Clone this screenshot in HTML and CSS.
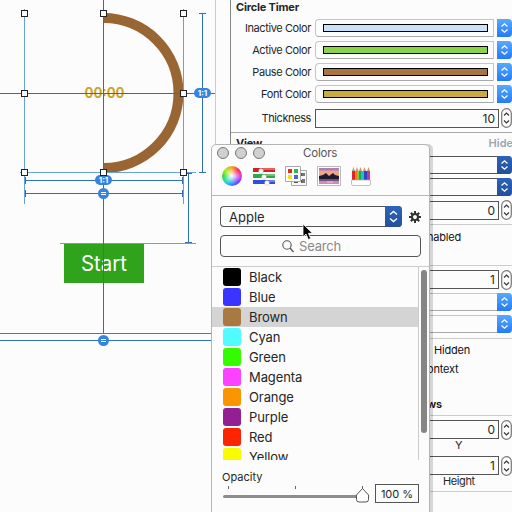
FILE: index.html
```
<!DOCTYPE html>
<html lang="en">
<head>
<meta charset="utf-8">
<title>Circle Timer</title>
<link rel="stylesheet" href="styles.css">
</head>
<body>
<svg class="defs" width="0" height="0">
  <symbol id="chev" viewBox="0 0 15 18"><path d="M4.500 7.500 7.500 4.800l3 2.700M4.500 10.500l3 2.700 3-2.700" fill="none" stroke="#fff" stroke-width="1.300"/></symbol>
  <symbol id="step" viewBox="0 0 11 20"><rect x=".7" y=".7" width="9.600" height="18.600" rx="4.800" fill="#fcfcfc" stroke="#777" stroke-width="1.200"/><path d="M3 7.500 5.500 5 8 7.500M3 12.500 5.500 15 8 12.500" fill="none" stroke="#333" stroke-width="1.100"/></symbol>
</svg>
<main class="app">
  <section class="canvas">
    <svg width="215" height="512" viewBox="0 0 215 512">
      <path d="M103.500 18A75 75 0 0 1 103.500 168" fill="none" stroke="#996633" stroke-width="10"/>
      <text x="84.500" y="97.500" class="time" textLength="40" lengthAdjust="spacingAndGlyphs">00:00</text>
      <rect x="64" y="243" width="80" height="40" fill="#2fa31b"/>
      <text x="81" y="271" class="start" textLength="46" lengthAdjust="spacingAndGlyphs">Start</text>
      <path d="M24.500 9V204M183.500 9V204M20 172.500H196M60 243.500H196" fill="none" stroke="#68a0da"/>
      <path d="M0 93.500H215M103.500 0V333M202.500 13V173M199 13.500H206M199 172.500H206M25 180.500H183M25.500 177V184M182.500 177V184M25 193.500H183M25.500 190V197M182.500 190V197M188.500 173V243M185 173.500H192M185 242.500H192M0 340.500H215" fill="none" stroke="#2c6fb3"/>
      <path d="M0 333.500H215" stroke="#77706f"/>
      <g fill="#3584de">
        <rect x="194" y="88" width="17" height="10" rx="5"/>
        <rect x="95" y="175" width="17" height="10" rx="5"/>
        <circle cx="103.500" cy="193.500" r="5.500"/>
        <circle cx="103.500" cy="340.500" r="5.500"/>
      </g>
      <path d="M101 192.500H106M101 194.500H106M101 339.500H106M101 341.500H106" stroke="#fff"/>
      <text x="202.500" y="96" class="ratio">1:1</text>
      <text x="103.500" y="183" class="ratio">1:1</text>
      <g fill="#fcfcfc" stroke="#222">
        <rect x="21.500" y="10.500" width="6" height="6"/><rect x="100.500" y="10.500" width="6" height="6"/><rect x="180.500" y="10.500" width="6" height="6"/>
        <rect x="21.500" y="90.500" width="6" height="6"/><rect x="180.500" y="90.500" width="6" height="6"/>
        <rect x="21.500" y="169.500" width="6" height="6"/><rect x="100.500" y="169.500" width="6" height="6"/><rect x="180.500" y="169.500" width="6" height="6"/>
      </g>
    </svg>
  </section>
  <aside class="inspector">
    <h2 class="heading first"><span>Circle Timer</span></h2>
    <div class="row"><label>Inactive Color</label><div class="well"><i class="swatch inactive"></i><svg class="arrow"><use href="#chev"/></svg></div></div>
    <div class="row"><label>Active Color</label><div class="well"><i class="swatch active"></i><svg class="arrow"><use href="#chev"/></svg></div></div>
    <div class="row"><label>Pause Color</label><div class="well"><i class="swatch pause"></i><svg class="arrow"><use href="#chev"/></svg></div></div>
    <div class="row"><label>Font Color</label><div class="well"><i class="swatch font"></i><svg class="arrow"><use href="#chev"/></svg></div></div>
    <div class="row thick"><label>Thickness</label><div class="field">10</div><svg class="stepper"><use href="#step"/></svg></div>
    <h2 class="heading view"><span>View</span><span class="hide">Hide</span></h2>
    <div class="row right"><div class="select dark"><svg class="arrow"><use href="#chev"/></svg></div></div>
    <div class="row right"><div class="select dark"><svg class="arrow"><use href="#chev"/></svg></div></div>
    <div class="row right f"><div class="field">0</div><svg class="stepper"><use href="#step"/></svg></div>
    <div class="check enabled"><span>nabled</span></div>
    <div class="row right alpha"><div class="field">1</div><svg class="stepper"><use href="#step"/></svg></div>
    <div class="row right"><div class="select"><svg class="arrow"><use href="#chev"/></svg></div></div>
    <div class="row right"><div class="select"><svg class="arrow"><use href="#chev"/></svg></div></div>
    <div class="check hidden"><span>Hidden</span></div>
    <div class="check context"><span>ontext</span></div>
    <div class="check bold"><span>ws</span></div>
    <div class="row right y"><div class="field">0</div><svg class="stepper"><use href="#step"/></svg></div>
    <div class="caption">Y</div>
    <div class="row right h"><div class="field">1</div><svg class="stepper"><use href="#step"/></svg></div>
    <div class="caption last">Height</div>
  </aside>
</main>
<section class="panel">
  <header class="titlebar"><i></i><i></i><i></i><span>Colors</span></header>
  <nav class="tabs">
    <div class="wheel"></div>
    <svg width="22" height="20" viewBox="0 0 22 20"><path fill="#d52020" d="M0 2h22v4H0z"/><path fill="#32a944" d="M0 8h22v4H0z"/><path fill="#344de0" d="M0 14h22v4H0z"/><path d="M10 2h12v2H10zM13 8h9v2h-9zM16 14h6v2h-6z" fill="#fff" opacity=".3"/><g fill="#fff" stroke="#aaa" stroke-width=".4"><circle cx="8" cy="5" r="2.400"/><circle cx="11" cy="11" r="2.400"/><circle cx="14" cy="17" r="2.400"/></g></svg>
    <svg width="22" height="20" viewBox="0 0 22 20"><path d="M6.500 4.500h15v15h-15z" fill="#f7f7f7" stroke="#aaa"/><path d="M16 7h3v3h-3zM16 14h3v3h-3zM9 15.500h4v1.500H9z" fill="#555"/><path d="M.5.500h15v15H.5z" fill="#fff" stroke="#aaa"/><path fill="#e62b25" d="M3 3h4v4H3z"/><path fill="#30bb3c" d="M9 3h4v4H9z"/><path fill="#f7df15" d="M3 9h4v4H3z"/><path fill="#3f69e5" d="M9 9h4v4H9z"/><path fill="#777" d="M17 7h3v3h-3zM17 13h3v4h-3z"/></svg>
    <svg class="photo" width="24" height="20" viewBox="0 0 24 20"><path d="M.5.500h23v19H.5z" fill="#fff" stroke="#bbb"/><path fill="#c98fb0" d="M2 2h20v16H2z"/><path fill="#edaa82" d="M2 5h20v5H2z"/><path fill="#ae80ac" d="M2 2h20v2H2z"/><path fill="#201c32" d="M2 10l4-1 3-2 3 3 4-3 2 2 4 1v3H2z"/><path fill="#71538b" d="M2 13h20v2H2z"/><path fill="#f0a4b7" d="M10 15h6v2h-6z"/></svg>
    <svg width="20" height="20" viewBox="0 0 20 20"><path fill="#db292b" d="M1 5h3v10H1z"/><path fill="#ee7e24" d="M4 5h2v10H4z"/><path fill="#80cb30" d="M6 5h2v10H6z"/><path fill="#20a650" d="M8 5h2v10H8z"/><path fill="#23bbd6" d="M10 5h3v10h-3z"/><path fill="#3543bc" d="M13 5h3v10h-3z"/><path fill="#bc36af" d="M16 5h3v10h-3z"/><path d="M1 5l1.500-4L4 5zM4.500 5 6 1l1.500 4zM8 5l1.500-4L11 5zM12 5l1.500-4L15 5zM16 5l1.500-4L19 5z" fill="#c49c70"/><path fill="#fff" stroke="#aaa" stroke-width=".7" d="M.5 14h19v4q0 1.500-1.500 1.500H2Q.5 19.500.5 18z"/></svg>
  </nav>
  <div class="controls">
    <div class="palette"><span>Apple</span><svg class="arrow" viewBox="0 0 17 21"><path d="m5 8.500 3.500-3L12 8.500M5 12.500l3.500 3 3.500-3" fill="none" stroke="#fff" stroke-width="1.400"/></svg></div>
    <svg class="gear" width="12" height="12" viewBox="-6 -6 12 12"><circle r="3" fill="none" stroke="#333" stroke-width="2.100"/><path d="M0-6V-3M0 3V6M-6 0H-3M3 0H6M-4.200-4.200-2.300-2.300M2.300 2.300 4.200 4.200M-4.200 4.200-2.300 2.300M2.300-2.300 4.200-4.200" stroke="#333" stroke-width="2"/></svg>
  </div>
  <div class="search"><svg width="12" height="13" viewBox="0 0 12 13"><circle cx="5" cy="5" r="4.200" fill="none" stroke="#555" stroke-width="1.100"/><path d="m8 8 3.500 4" stroke="#555" stroke-width="1.300"/></svg><span>Search</span></div>
  <div class="list">
    <ul>
      <li><i class="black"></i><span>Black</span></li>
      <li><i class="blue"></i><span>Blue</span></li>
      <li class="selected"><i class="brown"></i><span>Brown</span></li>
      <li><i class="cyan"></i><span>Cyan</span></li>
      <li><i class="green"></i><span>Green</span></li>
      <li><i class="magenta"></i><span>Magenta</span></li>
      <li><i class="orange"></i><span>Orange</span></li>
      <li><i class="purple"></i><span>Purple</span></li>
      <li><i class="red"></i><span>Red</span></li>
      <li><i class="yellow"></i><span>Yellow</span></li>
    </ul>
    <div class="track"><div class="thumb"></div></div>
  </div>
  <div class="opacity">Opacity</div>
  <div class="sliderrow">
    <svg width="148" height="20" viewBox="0 0 148 20"><path d="M6.500 2V5M73.500 2V5M140.500 2V5" stroke="#666"/><path d="M2.500 12.500H138" stroke="#8c8c8c" stroke-width="3" stroke-linecap="round"/><path d="M140.500 4.500 146.500 11v4.500q0 2.500-2.500 2.500h-7q-2.500 0-2.500-2.500v-4.500z" fill="#fff" stroke="#555"/></svg>
    <div class="percent">100 %</div>
  </div>
</section>
<svg class="cursor" width="12" height="18" viewBox="0 0 12 18"><path d="M1 1v13l3-3 2.300 5.500 2.400-1L6.400 10.300h4.100z" fill="#000" stroke="#fff" stroke-width=".8"/></svg>
</body>
</html>
```
FILE: styles.css
```
* { box-sizing: border-box; }
body { margin: 0; width: 512px; height: 512px; overflow: hidden; position: relative; background: #fcfcfc; color: #262626; font-family: Inter, "Liberation Sans", sans-serif; }
svg { display: block; flex: none; }
i { display: block; flex: none; }
.defs { position: absolute; }
.app { display: flex; height: 512px; }
.canvas { width: 216px; border-right: 1px solid #ccc; margin-right: 14px; flex: none; }
.time { font: 700 14px Inter, sans-serif; fill: #c9a52f; }
.start { font: 400 21px Inter, sans-serif; fill: #fff; }
.ratio { font: 700 8px Inter, sans-serif; fill: #fff; text-anchor: middle; }

.inspector { width: 282px; flex: none; border-left: 1px solid #858585; font-size: 11px; }
.heading { margin: 0; padding-left: 5px; font-size: 11px; font-weight: 700; display: flex; align-items: center; justify-content: space-between; letter-spacing: -.2px; }
.first { height: 17px; padding-bottom: 4px; }
.row { display: flex; align-items: center; height: 22px; }
.row label { width: 80px; margin-right: 4px; text-align: right; white-space: nowrap; letter-spacing: -.4px; }
.well, .select { height: 18px; flex: 1; display: flex; align-items: center; border: 1px solid #c6c6c6; border-bottom-color: #aaa; border-right: 0; border-radius: 4px; }
.well { padding-left: 7px; }
.swatch { width: 165px; height: 8px; border: 1px solid #000; }
.inactive { background: #cae1fa; }
.active { background: #8bd348; }
.pause { background: #a87540; }
.font { background: #cbaa43; }
.arrow { width: 15px; height: 18px; margin-left: auto; background: linear-gradient(#58a9fc, #247bf5); border-radius: 0 4px 4px 0; }
.well .arrow { box-shadow: -3px 0 #fcfcfc, -4px 0 #c6c6c6; }
.dark { border-color: #555; }
.dark .arrow { background: linear-gradient(#2d63bb, #214f9b); }
.thick { height: 27px; padding-bottom: 1px; }
.field { flex: 1; height: 19px; border: 1px solid #555; text-align: right; padding-right: 3px; line-height: 17px; font-size: 12px; }
.stepper { width: 11px; height: 20px; margin-left: 2px; }
.view { height: 22px; border-top: 1px solid #aaa; padding-bottom: 2px; }
.hide { color: #9ba5af; margin-right: -1px; font-weight: 600; letter-spacing: 0; }
.right { padding-left: 84px; }
.f { height: 26px; padding-bottom: 2px; }
.check { border-top: 1px solid #ccc; padding-left: 196px; color: #111; display: flex; align-items: center; letter-spacing: -.2px; }
.enabled { height: 41px; padding-bottom: 17px; }
.alpha { height: 26px; border-top: 1px solid #ccc; padding-top: 2px; }
.hidden { height: 22px; margin-top: 3px; padding-left: 203px; }
.context { height: 18px; border: 0; padding-bottom: 1px; }
.bold { height: 37px; border: 0; padding-top: 15px; font-weight: 600; }
.y { height: 24px; border-top: 1px solid #ccc; padding-top: 4px; }
.caption { height: 17px; line-height: 12px; padding-left: 224px; letter-spacing: -.4px; }
.h { height: 19px; }
.last { padding-left: 212px; border-bottom: 1px solid #ccc; }

.panel { position: absolute; left: 211px; top: 144px; width: 219px; height: 374px; background: #fcfcfc; border: 1px solid #b5b5b5; border-radius: 5px 5px 0 0; box-shadow: 3px 0 0 rgba(0, 0, 0, .15); }
.titlebar { height: 18px; display: flex; align-items: center; gap: 6px; padding: 0 0 1px 5px; font-size: 11.5px; color: #555; }
.titlebar i { width: 12px; height: 12px; border: 1px solid #777; border-radius: 50%; background: #d0d0d0; margin-top: -1px; }
.titlebar span { margin: -1px 0 0 32px; letter-spacing: -.2px; }
.tabs { height: 33px; border-bottom: 1px solid #b6b6b6; display: flex; align-items: flex-start; padding: 3px 0 0 10px; }
.wheel { width: 20px; height: 20px; border-radius: 50%; background: radial-gradient(#fff, transparent 60%), conic-gradient(#ff9d2a, #ff2850, #e03ce0, #7040ff, #258bff, #15ded0, #35e035, #b0ea20, #ff9d2a); margin-right: 11px; }
.tabs svg { margin-right: 10px; }
.tabs .photo { margin-right: 10px; }
.controls { display: flex; align-items: center; padding: 10px 8px 0; gap: 7px; }
.palette { width: 182px; height: 21px; border: 1px solid #555; border-right: 0; border-radius: 4px; display: flex; align-items: center; padding-left: 8px; font-size: 13px; }
.palette .arrow { width: 17px; height: 21px; background: linear-gradient(#2e63b7, #23519c); }
.search { height: 22px; margin: 8px 8px 0; border: 1px solid #555; border-radius: 4px; display: flex; align-items: center; padding-left: 61px; gap: 5px; font-size: 13px; letter-spacing: -.2px; color: #888; }
.list { height: 194px; margin-top: 9px; border-top: 1px solid #ccc; display: flex; overflow: hidden; }
ul { list-style: none; margin: 0; padding: 0; width: 207px; border-right: 1px solid #ccc; }
li { height: 20px; display: flex; align-items: center; padding-left: 11px; font-size: 13px; letter-spacing: -.1px; }
.selected { background: #d4d4d4; }
li i { width: 18px; height: 18px; border-radius: 3px; margin-right: 8px; }
.black { background: #000; }
.blue { background: #3b33ff; }
.brown { background: #aa7942; }
.cyan { background: #52fbff; }
.green { background: #35fb00; }
.magenta { background: #fb42ff; }
.orange { background: #f89500; }
.purple { background: #932092; }
.red { background: #fb2600; }
.yellow { background: #fafb00; }
.track { width: 10px; padding: 3px 0 0 2px; }
.thumb { width: 6px; height: 163px; border-radius: 3px; background: #858585; }
.opacity { padding: 10px 0 0 10px; font-size: 11px; line-height: 14px; }
.sliderrow { display: flex; padding-left: 10px; }
.percent { width: 44px; height: 19px; margin-left: 5px; border: 1px solid #555; font-size: 11px; line-height: 18px; text-align: center; }
.cursor { position: absolute; left: 302px; top: 223px; }
```
